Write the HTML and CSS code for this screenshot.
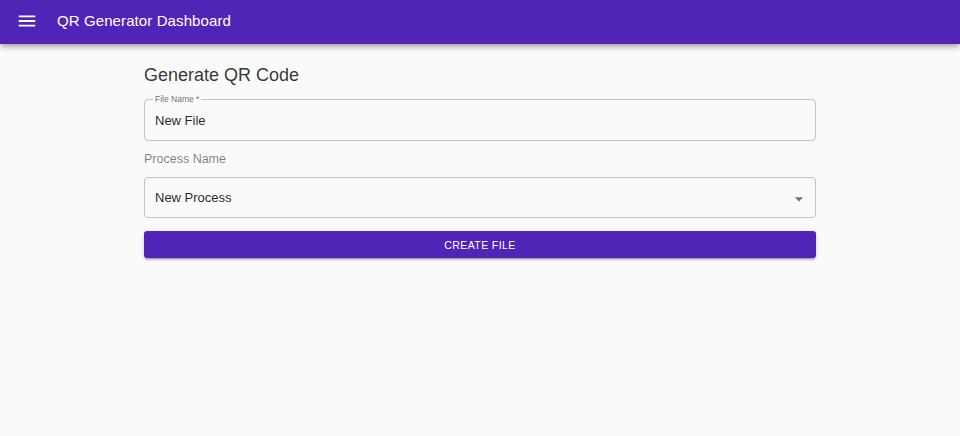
FILE: index.html
```html
<!DOCTYPE html>
<html>
<head>
<meta charset="utf-8">
<link rel="stylesheet" href="styles.css">
</head>
<body>
<header class="appbar">
  <button class="menu-btn" aria-label="menu">
    <svg width="24" height="24" viewBox="0 0 24 24"><path d="M3 18h18v-2H3v2zm0-5h18v-2H3v2zm0-7v2h18V6H3z" fill="#fff"/></svg>
  </button>
  <h1 class="title">QR Generator Dashboard</h1>
</header>
<main class="container">
  <h2 class="heading">Generate QR Code</h2>
  <div class="field">
    <span class="float-label">File Name *</span>
    <span class="value">New File</span>
  </div>
  <div class="plain-label">Process Name</div>
  <div class="select">
    <span class="value">New Process</span>
    <svg class="caret" width="20" height="20" viewBox="0 0 24 24"><path d="M7 10l5 5 5-5z" fill="#757575"/></svg>
  </div>
  <button class="create">CREATE FILE</button>
</main>
</body>
</html>
```
FILE: styles.css
```css
html, body { margin: 0; padding: 0; }
body {
  background: #fafafa;
  font-family: "Liberation Sans", Arial, sans-serif;
  color: rgba(0,0,0,0.87);
  height: 436px;
  overflow: hidden;
}
.appbar {
  height: 44px;
  box-sizing: border-box;
  padding: 0 16px 3px 16px;
  background: #5124b8;
  display: flex;
  align-items: center;
  box-shadow: 0 2px 4px -1px rgba(0,0,0,0.2), 0 4px 5px 0 rgba(0,0,0,0.14), 0 1px 10px 0 rgba(0,0,0,0.12);
  position: relative;
}
.menu-btn {
  background: none;
  border: 0;
  padding: 0;
  width: 22px;
  height: 22px;
  margin-right: 19px;
  display: flex;
}
.menu-btn svg { width: 22px; height: 22px; }
.title {
  margin: 0;
  color: #fff;
  font-size: 15px;
  line-height: 18px;
  font-weight: 400;
  letter-spacing: 0.1px;
}
.container {
  width: 672px;
  margin: 0 auto;
  padding-top: 19px;
  display: flex;
  flex-direction: column;
}
.heading {
  margin: 0 0 12px 0;
  font-size: 18px;
  font-weight: 400;
  line-height: 24px;
  color: rgba(0,0,0,0.8);
}
.field {
  position: relative;
  border: 1px solid #c4c4c4;
  border-radius: 4px;
  height: 42px;
  box-sizing: border-box;
  padding: 0 10px;
  display: flex;
  align-items: center;
}
.float-label {
  position: absolute;
  left: 8px;
  top: -6px;
  padding: 0 2px;
  background: #fafafa;
  font-size: 8.5px;
  line-height: 10px;
  color: rgba(0,0,0,0.6);
}
.value {
  font-size: 13px;
  color: rgba(0,0,0,0.87);
}
.plain-label {
  margin-top: 11px;
  font-size: 12.5px;
  color: rgba(0,0,0,0.5);
  line-height: 15px;
}
.select {
  margin-top: 10px;
  border: 1px solid #c4c4c4;
  border-radius: 4px;
  height: 41px;
  box-sizing: border-box;
  padding: 0 6px 0 10px;
  display: flex;
  align-items: center;
  justify-content: space-between;
}
.caret { margin-top: 2px; }
.create {
  margin-top: 13px;
  height: 27px;
  background: #5124b8;
  color: #fff;
  border: 0;
  border-radius: 3px;
  font-family: "Liberation Sans", Arial, sans-serif;
  font-size: 10.5px;
  font-weight: 400;
  letter-spacing: 0.4px;
  box-shadow: 0 3px 1px -2px rgba(0,0,0,0.2), 0 2px 2px 0 rgba(0,0,0,0.14), 0 1px 5px 0 rgba(0,0,0,0.12);
}
```
